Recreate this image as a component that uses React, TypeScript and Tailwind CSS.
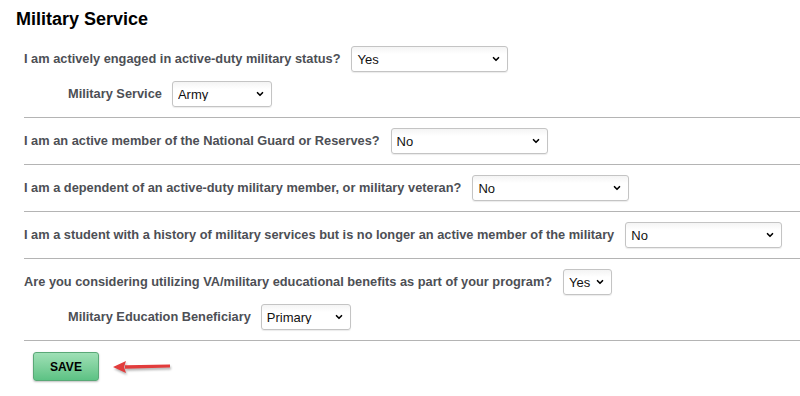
import { ChevronDown } from "lucide-react";

type Opt = { value: string; width: string };

const Select = ({ value, width }: Opt) => (
  <div className={`relative h-[26px] ${width}`}>
    <select
      defaultValue={value}
      className="h-full w-full appearance-none rounded-[3px] border border-[#c4c4c4] bg-gradient-to-b from-[#f4f4f4] to-white to-[30%] pl-[5px] pr-5 text-[13px] leading-none text-[#111] shadow-[0_1px_1px_rgba(0,0,0,0.08)] outline-none"
    >
      <option>{value}</option>
    </select>
    <ChevronDown
      className="pointer-events-none absolute right-[7px] top-[8px] h-[10px] w-[10px] text-black"
      strokeWidth={4}
    />
  </div>
);

const Field = ({
  label,
  value,
  width,
  sub,
}: {
  label: string;
  value: string;
  width: string;
  sub?: boolean;
}) => (
  <div className={`flex items-center ${sub ? "gap-[10px] pl-[44px]" : "gap-[11px]"}`}>
    <label className="text-[12.8px] font-bold text-[#4d4f55]">{label}</label>
    <Select value={value} width={width} />
  </div>
);

const Section = ({ children }: { children: React.ReactNode }) => (
  <div className="flex flex-col gap-[9px] border-t border-[#b4b4b4] py-[10px] first:border-t-0">
    {children}
  </div>
);

const App = () => {
  return (
    <div
      className="h-[396px] w-[800px] bg-white"
      style={{ fontFamily: '"Liberation Sans", Arial, sans-serif' }}
    >
      <h1 className="pl-4 pt-[8px] text-[18px] font-bold leading-[22px] text-black">
        Military Service
      </h1>
      <div className="ml-6 mt-[6px]">
        <Section>
          <Field
            label="I am actively engaged in active-duty military status?"
            value="Yes"
            width="w-[157px]"
          />
          <Field label="Military Service" value="Army" width="w-[100px]" sub />
        </Section>
        <Section>
          <Field
            label="I am an active member of the National Guard or Reserves?"
            value="No"
            width="w-[157px]"
          />
        </Section>
        <Section>
          <Field
            label="I am a dependent of an active-duty military member, or military veteran?"
            value="No"
            width="w-[157px]"
          />
        </Section>
        <Section>
          <Field
            label="I am a student with a history of military services but is no longer an active member of the military"
            value="No"
            width="w-[157px]"
          />
        </Section>
        <Section>
          <Field
            label="Are you considering utilizing VA/military educational benefits as part of your program?"
            value="Yes"
            width="w-[49px]"
          />
          <Field
            label="Military Education Beneficiary"
            value="Primary"
            width="w-[90px]"
            sub
          />
        </Section>
        <div className="flex items-center gap-[14px] border-t border-[#b4b4b4] pl-[9px] pt-[11px]">
          <button
            type="button"
            className="h-[29px] w-[66px] rounded-[3px] border border-[#5aa877] bg-gradient-to-b from-[#9fe0b6] to-[#5cc284] text-[12px] font-bold text-black shadow-[0_1px_2px_rgba(0,0,0,0.25)]"
          >
            SAVE
          </button>
          <svg width="60" height="16" viewBox="0 0 60 16" className="drop-shadow-[1px_2px_1px_rgba(0,0,0,0.3)]">
            <path d="M12 6.2 L57 5.5 L57 8.5 L12 9.8 Z" fill="#e23c3c" />
            <path d="M0 8 L13 2 L11 8 L13 14 Z" fill="#e23c3c" />
          </svg>
        </div>
      </div>
    </div>
  );
};

export default App;
